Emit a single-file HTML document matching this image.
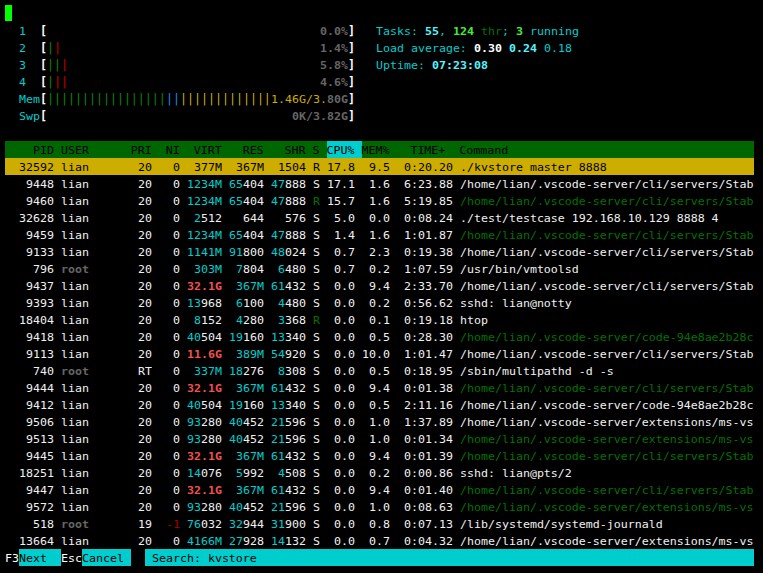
<!DOCTYPE html>
<html lang="en"><head><meta charset="utf-8"><title>htop</title>
<style>
html,body{margin:0;padding:0;background:#000;}
body{width:763px;height:573px;overflow:hidden;position:relative;}
#t{position:absolute;left:0;top:0;width:763px;height:573px;background:#000000;overflow:hidden;font-family:"DejaVu Sans Mono","Liberation Mono",monospace;font-size:11.627px;line-height:17px;color:#f0f0f0;font-variant-ligatures:none;font-kerning:none;-webkit-font-smoothing:antialiased;}
.b{position:absolute;}
.l{position:absolute;left:0;height:17px;white-space:pre;letter-spacing:0px;}
.l span{position:absolute;top:1px;white-space:pre;transform:scaleY(0.92);transform-origin:0 12px;}
.l span.T{top:1px;transform:scaleY(1.03);transform-origin:0 12px;}
.B{font-weight:bold;}
.fw{color:#f0f0f0;}
.fW{color:#ffffff;}
.fc{color:#00cdcd;}
.fC{color:#55f4ff;}
.fg{color:#007200;}
.fG{color:#44ee33;}
.fr{color:#a00000;}
.fR{color:#f05050;}
.fy{color:#cdad00;}
.fb{color:#1c86ee;}
.fk{color:#000000;}
.fq{color:#008800;}
.fK{color:#666666;}
.hg{background:#006600;}
.hc{background:#00cdcd;}
.hy{background:#cdad00;}
#cur{position:absolute;left:5px;top:5px;width:7px;height:16px;background:#00ff00;}
</style></head><body><div id="t">
<div id="cur"></div>
<div class="b hg" style="left:5px;top:141px;width:749px;height:17px"></div>
<div class="b hc" style="left:327px;top:141px;width:35px;height:17px"></div>
<div class="b hy" style="left:5px;top:158px;width:749px;height:17px"></div>
<div class="b hc" style="left:19px;top:549px;width:42px;height:17px"></div>
<div class="b hc" style="left:82px;top:549px;width:49px;height:17px"></div>
<div class="b hc" style="left:145px;top:549px;width:609px;height:17px"></div>
<div class="l" style="top:22px">
<span class="fc" style="left:19px">1</span><span class="fW B T" style="left:40px">[</span><span class="fK B" style="left:320px">0.0%</span><span class="fW B T" style="left:348px">]</span><span class="fc" style="left:376px">Tasks: </span><span class="fC B" style="left:425px">55</span><span class="fc" style="left:439px">, </span><span class="fG B" style="left:453px">124</span><span class="fg" style="left:474px"> thr</span><span class="fc" style="left:502px">; </span><span class="fG B" style="left:516px">3</span><span class="fc" style="left:523px"> running</span>
</div>
<div class="l" style="top:39px">
<span class="fc" style="left:19px">2</span><span class="fW B T" style="left:40px">[</span><span class="fq T" style="left:47px">|</span><span class="fr B T" style="left:54px">|</span><span class="fK B" style="left:320px">1.4%</span><span class="fW B T" style="left:348px">]</span><span class="fc" style="left:376px">Load average: </span><span class="fW B" style="left:474px">0.30</span><span class="fC B" style="left:509px">0.24</span><span class="fc" style="left:544px">0.18</span>
</div>
<div class="l" style="top:56px">
<span class="fc" style="left:19px">3</span><span class="fW B T" style="left:40px">[</span><span class="fq T" style="left:47px">|</span><span class="fq T" style="left:54px">|</span><span class="fr B T" style="left:61px">|</span><span class="fK B" style="left:320px">5.8%</span><span class="fW B T" style="left:348px">]</span><span class="fc" style="left:376px">Uptime: </span><span class="fC B" style="left:432px">07:23:08</span>
</div>
<div class="l" style="top:73px">
<span class="fc" style="left:19px">4</span><span class="fW B T" style="left:40px">[</span><span class="fq T" style="left:47px">|</span><span class="fr B T" style="left:54px">|</span><span class="fr B T" style="left:61px">|</span><span class="fK B" style="left:320px">4.6%</span><span class="fW B T" style="left:348px">]</span>
</div>
<div class="l" style="top:90px">
<span class="fc" style="left:19px">Mem</span><span class="fW B T" style="left:40px">[</span><span class="fq T" style="left:47px">|||||||||||||||||</span><span class="fb T" style="left:166px">||</span><span class="fy T" style="left:180px">|||||||||||||</span><span class="fy" style="left:271px">1.46G/3.</span><span class="fK B" style="left:327px">80G</span><span class="fW B T" style="left:348px">]</span>
</div>
<div class="l" style="top:107px">
<span class="fc" style="left:19px">Swp</span><span class="fW B T" style="left:40px">[</span><span class="fK B" style="left:292px">0K/3.82G</span><span class="fW B T" style="left:348px">]</span>
</div>
<div class="l" style="top:141px">
<span class="fk" style="left:5px">    PID USER      PRI  NI  VIRT   RES   SHR S CPU% MEM%   TIME+  Command</span>
</div>
<div class="l" style="top:158px">
<span class="fk" style="left:5px">  32592</span><span class="fk" style="left:61px">lian</span><span class="fk" style="left:131px"> 20</span><span class="fk" style="left:159px">  0</span><span class="fk" style="left:187px"> 377M</span><span class="fk" style="left:229px"> 367M</span><span class="fk" style="left:271px"> 1504</span><span class="fk" style="left:313px">R</span><span class="fk" style="left:327px">17.8</span><span class="fk" style="left:362px"> 9.5</span><span class="fk" style="left:397px"> 0:20.20</span><span class="fk" style="left:460px">./kvstore master 8888</span>
</div>
<div class="l" style="top:175px">
<span class="fw" style="left:5px">   9448</span><span class="fw" style="left:61px">lian</span><span class="fw" style="left:131px"> 20</span><span class="fw" style="left:159px">  0</span><span class="fc" style="left:187px">1234M</span><span class="fc" style="left:229px">65</span><span class="fw" style="left:243px">404</span><span class="fc" style="left:271px">47</span><span class="fw" style="left:285px">888</span><span class="fw" style="left:313px">S</span><span class="fw" style="left:327px">17.1</span><span class="fw" style="left:362px"> 1.6</span><span class="fw" style="left:397px"> 6:23.88</span><span class="fw" style="left:460px">/home/lian/.vscode-server/cli/servers/Stab</span>
</div>
<div class="l" style="top:192px">
<span class="fw" style="left:5px">   9460</span><span class="fw" style="left:61px">lian</span><span class="fw" style="left:131px"> 20</span><span class="fw" style="left:159px">  0</span><span class="fc" style="left:187px">1234M</span><span class="fc" style="left:229px">65</span><span class="fw" style="left:243px">404</span><span class="fc" style="left:271px">47</span><span class="fw" style="left:285px">888</span><span class="fg" style="left:313px">R</span><span class="fw" style="left:327px">15.7</span><span class="fw" style="left:362px"> 1.6</span><span class="fw" style="left:397px"> 5:19.85</span><span class="fg" style="left:460px">/home/lian/.vscode-server/cli/servers/Stab</span>
</div>
<div class="l" style="top:209px">
<span class="fw" style="left:5px">  32628</span><span class="fw" style="left:61px">lian</span><span class="fw" style="left:131px"> 20</span><span class="fw" style="left:159px">  0</span><span class="fc" style="left:187px"> 2</span><span class="fw" style="left:201px">512</span><span class="fw" style="left:229px">  644</span><span class="fw" style="left:271px">  576</span><span class="fw" style="left:313px">S</span><span class="fw" style="left:327px"> 5.0</span><span class="fw" style="left:362px"> 0.0</span><span class="fw" style="left:397px"> 0:08.24</span><span class="fw" style="left:460px">./test/testcase 192.168.10.129 8888 4</span>
</div>
<div class="l" style="top:226px">
<span class="fw" style="left:5px">   9459</span><span class="fw" style="left:61px">lian</span><span class="fw" style="left:131px"> 20</span><span class="fw" style="left:159px">  0</span><span class="fc" style="left:187px">1234M</span><span class="fc" style="left:229px">65</span><span class="fw" style="left:243px">404</span><span class="fc" style="left:271px">47</span><span class="fw" style="left:285px">888</span><span class="fw" style="left:313px">S</span><span class="fw" style="left:327px"> 1.4</span><span class="fw" style="left:362px"> 1.6</span><span class="fw" style="left:397px"> 1:01.87</span><span class="fg" style="left:460px">/home/lian/.vscode-server/cli/servers/Stab</span>
</div>
<div class="l" style="top:243px">
<span class="fw" style="left:5px">   9133</span><span class="fw" style="left:61px">lian</span><span class="fw" style="left:131px"> 20</span><span class="fw" style="left:159px">  0</span><span class="fc" style="left:187px">1141M</span><span class="fc" style="left:229px">91</span><span class="fw" style="left:243px">800</span><span class="fc" style="left:271px">48</span><span class="fw" style="left:285px">024</span><span class="fw" style="left:313px">S</span><span class="fw" style="left:327px"> 0.7</span><span class="fw" style="left:362px"> 2.3</span><span class="fw" style="left:397px"> 0:19.38</span><span class="fw" style="left:460px">/home/lian/.vscode-server/cli/servers/Stab</span>
</div>
<div class="l" style="top:260px">
<span class="fw" style="left:5px">    796</span><span class="fK B" style="left:61px">root</span><span class="fw" style="left:131px"> 20</span><span class="fw" style="left:159px">  0</span><span class="fc" style="left:187px"> 303M</span><span class="fc" style="left:229px"> 7</span><span class="fw" style="left:243px">804</span><span class="fc" style="left:271px"> 6</span><span class="fw" style="left:285px">480</span><span class="fw" style="left:313px">S</span><span class="fw" style="left:327px"> 0.7</span><span class="fw" style="left:362px"> 0.2</span><span class="fw" style="left:397px"> 1:07.59</span><span class="fw" style="left:460px">/usr/bin/vmtoolsd</span>
</div>
<div class="l" style="top:277px">
<span class="fw" style="left:5px">   9437</span><span class="fw" style="left:61px">lian</span><span class="fw" style="left:131px"> 20</span><span class="fw" style="left:159px">  0</span><span class="fR B" style="left:187px">32.1G</span><span class="fc" style="left:229px"> 367M</span><span class="fc" style="left:271px">61</span><span class="fw" style="left:285px">432</span><span class="fw" style="left:313px">S</span><span class="fw" style="left:327px"> 0.0</span><span class="fw" style="left:362px"> 9.4</span><span class="fw" style="left:397px"> 2:33.70</span><span class="fw" style="left:460px">/home/lian/.vscode-server/cli/servers/Stab</span>
</div>
<div class="l" style="top:294px">
<span class="fw" style="left:5px">   9393</span><span class="fw" style="left:61px">lian</span><span class="fw" style="left:131px"> 20</span><span class="fw" style="left:159px">  0</span><span class="fc" style="left:187px">13</span><span class="fw" style="left:201px">968</span><span class="fc" style="left:229px"> 6</span><span class="fw" style="left:243px">100</span><span class="fc" style="left:271px"> 4</span><span class="fw" style="left:285px">480</span><span class="fw" style="left:313px">S</span><span class="fw" style="left:327px"> 0.0</span><span class="fw" style="left:362px"> 0.2</span><span class="fw" style="left:397px"> 0:56.62</span><span class="fw" style="left:460px">sshd: lian@notty</span>
</div>
<div class="l" style="top:311px">
<span class="fw" style="left:5px">  18404</span><span class="fw" style="left:61px">lian</span><span class="fw" style="left:131px"> 20</span><span class="fw" style="left:159px">  0</span><span class="fc" style="left:187px"> 8</span><span class="fw" style="left:201px">152</span><span class="fc" style="left:229px"> 4</span><span class="fw" style="left:243px">280</span><span class="fc" style="left:271px"> 3</span><span class="fw" style="left:285px">368</span><span class="fg" style="left:313px">R</span><span class="fw" style="left:327px"> 0.0</span><span class="fw" style="left:362px"> 0.1</span><span class="fw" style="left:397px"> 0:19.18</span><span class="fw" style="left:460px">htop</span>
</div>
<div class="l" style="top:328px">
<span class="fw" style="left:5px">   9418</span><span class="fw" style="left:61px">lian</span><span class="fw" style="left:131px"> 20</span><span class="fw" style="left:159px">  0</span><span class="fc" style="left:187px">40</span><span class="fw" style="left:201px">504</span><span class="fc" style="left:229px">19</span><span class="fw" style="left:243px">160</span><span class="fc" style="left:271px">13</span><span class="fw" style="left:285px">340</span><span class="fw" style="left:313px">S</span><span class="fw" style="left:327px"> 0.0</span><span class="fw" style="left:362px"> 0.5</span><span class="fw" style="left:397px"> 0:28.30</span><span class="fg" style="left:460px">/home/lian/.vscode-server/code-94e8ae2b28c</span>
</div>
<div class="l" style="top:345px">
<span class="fw" style="left:5px">   9113</span><span class="fw" style="left:61px">lian</span><span class="fw" style="left:131px"> 20</span><span class="fw" style="left:159px">  0</span><span class="fR B" style="left:187px">11.6G</span><span class="fc" style="left:229px"> 389M</span><span class="fc" style="left:271px">54</span><span class="fw" style="left:285px">920</span><span class="fw" style="left:313px">S</span><span class="fw" style="left:327px"> 0.0</span><span class="fw" style="left:362px">10.0</span><span class="fw" style="left:397px"> 1:01.47</span><span class="fw" style="left:460px">/home/lian/.vscode-server/cli/servers/Stab</span>
</div>
<div class="l" style="top:362px">
<span class="fw" style="left:5px">    740</span><span class="fK B" style="left:61px">root</span><span class="fw" style="left:131px"> RT</span><span class="fw" style="left:159px">  0</span><span class="fc" style="left:187px"> 337M</span><span class="fc" style="left:229px">18</span><span class="fw" style="left:243px">276</span><span class="fc" style="left:271px"> 8</span><span class="fw" style="left:285px">308</span><span class="fw" style="left:313px">S</span><span class="fw" style="left:327px"> 0.0</span><span class="fw" style="left:362px"> 0.5</span><span class="fw" style="left:397px"> 0:18.95</span><span class="fw" style="left:460px">/sbin/multipathd -d -s</span>
</div>
<div class="l" style="top:379px">
<span class="fw" style="left:5px">   9444</span><span class="fw" style="left:61px">lian</span><span class="fw" style="left:131px"> 20</span><span class="fw" style="left:159px">  0</span><span class="fR B" style="left:187px">32.1G</span><span class="fc" style="left:229px"> 367M</span><span class="fc" style="left:271px">61</span><span class="fw" style="left:285px">432</span><span class="fw" style="left:313px">S</span><span class="fw" style="left:327px"> 0.0</span><span class="fw" style="left:362px"> 9.4</span><span class="fw" style="left:397px"> 0:01.38</span><span class="fg" style="left:460px">/home/lian/.vscode-server/cli/servers/Stab</span>
</div>
<div class="l" style="top:396px">
<span class="fw" style="left:5px">   9412</span><span class="fw" style="left:61px">lian</span><span class="fw" style="left:131px"> 20</span><span class="fw" style="left:159px">  0</span><span class="fc" style="left:187px">40</span><span class="fw" style="left:201px">504</span><span class="fc" style="left:229px">19</span><span class="fw" style="left:243px">160</span><span class="fc" style="left:271px">13</span><span class="fw" style="left:285px">340</span><span class="fw" style="left:313px">S</span><span class="fw" style="left:327px"> 0.0</span><span class="fw" style="left:362px"> 0.5</span><span class="fw" style="left:397px"> 2:11.16</span><span class="fw" style="left:460px">/home/lian/.vscode-server/code-94e8ae2b28c</span>
</div>
<div class="l" style="top:413px">
<span class="fw" style="left:5px">   9506</span><span class="fw" style="left:61px">lian</span><span class="fw" style="left:131px"> 20</span><span class="fw" style="left:159px">  0</span><span class="fc" style="left:187px">93</span><span class="fw" style="left:201px">280</span><span class="fc" style="left:229px">40</span><span class="fw" style="left:243px">452</span><span class="fc" style="left:271px">21</span><span class="fw" style="left:285px">596</span><span class="fw" style="left:313px">S</span><span class="fw" style="left:327px"> 0.0</span><span class="fw" style="left:362px"> 1.0</span><span class="fw" style="left:397px"> 1:37.89</span><span class="fw" style="left:460px">/home/lian/.vscode-server/extensions/ms-vs</span>
</div>
<div class="l" style="top:430px">
<span class="fw" style="left:5px">   9513</span><span class="fw" style="left:61px">lian</span><span class="fw" style="left:131px"> 20</span><span class="fw" style="left:159px">  0</span><span class="fc" style="left:187px">93</span><span class="fw" style="left:201px">280</span><span class="fc" style="left:229px">40</span><span class="fw" style="left:243px">452</span><span class="fc" style="left:271px">21</span><span class="fw" style="left:285px">596</span><span class="fw" style="left:313px">S</span><span class="fw" style="left:327px"> 0.0</span><span class="fw" style="left:362px"> 1.0</span><span class="fw" style="left:397px"> 0:01.34</span><span class="fg" style="left:460px">/home/lian/.vscode-server/extensions/ms-vs</span>
</div>
<div class="l" style="top:447px">
<span class="fw" style="left:5px">   9445</span><span class="fw" style="left:61px">lian</span><span class="fw" style="left:131px"> 20</span><span class="fw" style="left:159px">  0</span><span class="fR B" style="left:187px">32.1G</span><span class="fc" style="left:229px"> 367M</span><span class="fc" style="left:271px">61</span><span class="fw" style="left:285px">432</span><span class="fw" style="left:313px">S</span><span class="fw" style="left:327px"> 0.0</span><span class="fw" style="left:362px"> 9.4</span><span class="fw" style="left:397px"> 0:01.39</span><span class="fg" style="left:460px">/home/lian/.vscode-server/cli/servers/Stab</span>
</div>
<div class="l" style="top:464px">
<span class="fw" style="left:5px">  18251</span><span class="fw" style="left:61px">lian</span><span class="fw" style="left:131px"> 20</span><span class="fw" style="left:159px">  0</span><span class="fc" style="left:187px">14</span><span class="fw" style="left:201px">076</span><span class="fc" style="left:229px"> 5</span><span class="fw" style="left:243px">992</span><span class="fc" style="left:271px"> 4</span><span class="fw" style="left:285px">508</span><span class="fw" style="left:313px">S</span><span class="fw" style="left:327px"> 0.0</span><span class="fw" style="left:362px"> 0.2</span><span class="fw" style="left:397px"> 0:00.86</span><span class="fw" style="left:460px">sshd: lian@pts/2</span>
</div>
<div class="l" style="top:481px">
<span class="fw" style="left:5px">   9447</span><span class="fw" style="left:61px">lian</span><span class="fw" style="left:131px"> 20</span><span class="fw" style="left:159px">  0</span><span class="fR B" style="left:187px">32.1G</span><span class="fc" style="left:229px"> 367M</span><span class="fc" style="left:271px">61</span><span class="fw" style="left:285px">432</span><span class="fw" style="left:313px">S</span><span class="fw" style="left:327px"> 0.0</span><span class="fw" style="left:362px"> 9.4</span><span class="fw" style="left:397px"> 0:01.40</span><span class="fg" style="left:460px">/home/lian/.vscode-server/cli/servers/Stab</span>
</div>
<div class="l" style="top:498px">
<span class="fw" style="left:5px">   9572</span><span class="fw" style="left:61px">lian</span><span class="fw" style="left:131px"> 20</span><span class="fw" style="left:159px">  0</span><span class="fc" style="left:187px">93</span><span class="fw" style="left:201px">280</span><span class="fc" style="left:229px">40</span><span class="fw" style="left:243px">452</span><span class="fc" style="left:271px">21</span><span class="fw" style="left:285px">596</span><span class="fw" style="left:313px">S</span><span class="fw" style="left:327px"> 0.0</span><span class="fw" style="left:362px"> 1.0</span><span class="fw" style="left:397px"> 0:08.63</span><span class="fg" style="left:460px">/home/lian/.vscode-server/extensions/ms-vs</span>
</div>
<div class="l" style="top:515px">
<span class="fw" style="left:5px">    518</span><span class="fK B" style="left:61px">root</span><span class="fw" style="left:131px"> 19</span><span class="fr" style="left:159px"> -1</span><span class="fc" style="left:187px">76</span><span class="fw" style="left:201px">032</span><span class="fc" style="left:229px">32</span><span class="fw" style="left:243px">944</span><span class="fc" style="left:271px">31</span><span class="fw" style="left:285px">900</span><span class="fw" style="left:313px">S</span><span class="fw" style="left:327px"> 0.0</span><span class="fw" style="left:362px"> 0.8</span><span class="fw" style="left:397px"> 0:07.13</span><span class="fw" style="left:460px">/lib/systemd/systemd-journald</span>
</div>
<div class="l" style="top:532px">
<span class="fw" style="left:5px">  13664</span><span class="fw" style="left:61px">lian</span><span class="fw" style="left:131px"> 20</span><span class="fw" style="left:159px">  0</span><span class="fc" style="left:187px">4166M</span><span class="fc" style="left:229px">27</span><span class="fw" style="left:243px">928</span><span class="fc" style="left:271px">14</span><span class="fw" style="left:285px">132</span><span class="fw" style="left:313px">S</span><span class="fw" style="left:327px"> 0.0</span><span class="fw" style="left:362px"> 0.7</span><span class="fw" style="left:397px"> 0:04.32</span><span class="fw" style="left:460px">/home/lian/.vscode-server/extensions/ms-vs</span>
</div>
<div class="l" style="top:549px">
<span class="fW" style="left:5px">F3</span><span class="fk" style="left:19px">Next  </span><span class="fW" style="left:61px">Esc</span><span class="fk" style="left:82px">Cancel </span><span class="fk" style="left:145px"> Search: kvstore</span>
</div>
</div></body></html>
